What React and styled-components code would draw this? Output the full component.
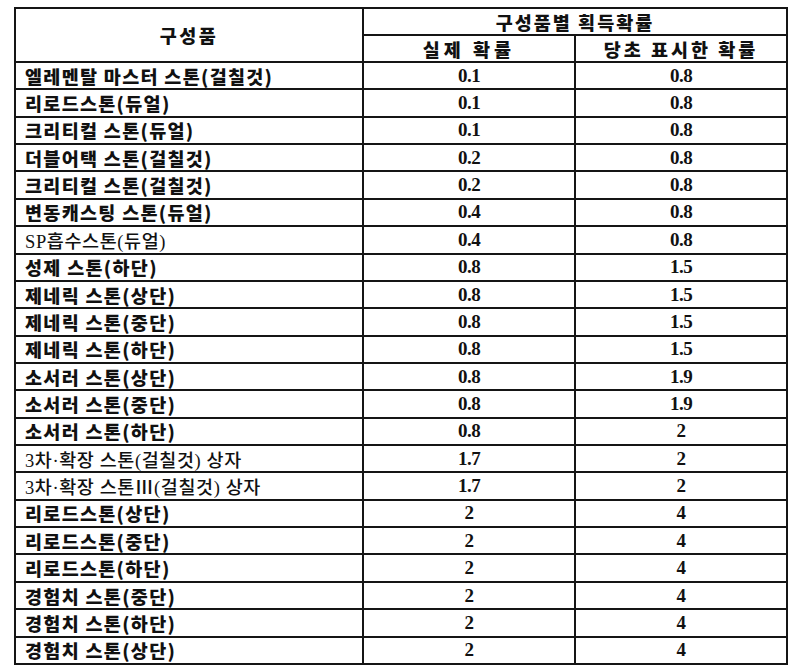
import React from 'react'
import styled, { createGlobalStyle } from 'styled-components'

const GlobalStyle = createGlobalStyle`
    html, body {
        margin: 0;
        padding: 0;
        background: #ffffff;
    }
`

const Page = styled.div`
    padding: 7px 0 0 14px;
    width: 792px;
    height: 672px;
    box-sizing: border-box;
    background: #fff;
`

const Grid = styled.div`
    display: grid;
    width: 774px;
    box-sizing: border-box;
    grid-template-columns: 346px 210px 210px;
    grid-template-rows: 25px 25px repeat(22, 25.36px);
    gap: 2px;
    padding: 2px;
    background: #151515;
`

const Cell = styled.div`
    background: #fff;
    display: flex;
    align-items: center;
    justify-content: ${props => (props.left ? 'flex-start' : 'center')};
    padding-left: ${props => (props.left ? '9px' : '0')};
    overflow: hidden;
    white-space: nowrap;
    color: #111;
`

const HeadCell = styled(Cell)`
    grid-row: ${props => props.row || 'auto'};
    grid-column: ${props => props.col || 'auto'};
    font-family: "Noto Sans CJK KR", sans-serif;
    font-weight: 900;
    font-size: 18.5px;
    letter-spacing: ${props => props.spacing || '2.5px'};
`

const NameCell = styled(Cell)`
    font-family: ${props => (props.plain
        ? '"Liberation Serif", "Noto Sans CJK KR", serif'
        : '"Noto Sans CJK KR", sans-serif')};
    font-weight: ${props => (props.plain ? 500 : 800)};
    font-size: ${props => (props.plain ? '18.5px' : '18.5px')};
    letter-spacing: ${props => (props.plain ? '0.6px' : '1.3px')};
`

const NumCell = styled(Cell)`
    font-family: "Liberation Serif", "DejaVu Serif", serif;
    font-weight: 700;
    font-size: 19px;
    letter-spacing: -0.5px;
`

const rows = [
    { name: '엘레멘탈 마스터 스톤(걸칠것)', real: '0.1', shown: '0.8' },
    { name: '리로드스톤(듀얼)', real: '0.1', shown: '0.8' },
    { name: '크리티컬 스톤(듀얼)', real: '0.1', shown: '0.8' },
    { name: '더블어택 스톤(걸칠것)', real: '0.2', shown: '0.8' },
    { name: '크리티컬 스톤(걸칠것)', real: '0.2', shown: '0.8' },
    { name: '변동캐스팅 스톤(듀얼)', real: '0.4', shown: '0.8' },
    { name: 'SP흡수스톤(듀얼)', real: '0.4', shown: '0.8', plain: true },
    { name: '성제 스톤(하단)', real: '0.8', shown: '1.5' },
    { name: '제네릭 스톤(상단)', real: '0.8', shown: '1.5' },
    { name: '제네릭 스톤(중단)', real: '0.8', shown: '1.5' },
    { name: '제네릭 스톤(하단)', real: '0.8', shown: '1.5' },
    { name: '소서러 스톤(상단)', real: '0.8', shown: '1.9' },
    { name: '소서러 스톤(중단)', real: '0.8', shown: '1.9' },
    { name: '소서러 스톤(하단)', real: '0.8', shown: '2' },
    { name: '3차·확장 스톤(걸칠것) 상자', real: '1.7', shown: '2', plain: true },
    { name: '3차·확장 스톤Ⅲ(걸칠것) 상자', real: '1.7', shown: '2', plain: true },
    { name: '리로드스톤(상단)', real: '2', shown: '4' },
    { name: '리로드스톤(중단)', real: '2', shown: '4' },
    { name: '리로드스톤(하단)', real: '2', shown: '4' },
    { name: '경험치 스톤(중단)', real: '2', shown: '4' },
    { name: '경험치 스톤(하단)', real: '2', shown: '4' },
    { name: '경험치 스톤(상단)', real: '2', shown: '4' },
]

export default function App() {
    return (
        <Page>
            <GlobalStyle />
            <Grid>
                <HeadCell row="1 / 3" col="1">구성품</HeadCell>
                <HeadCell row="1" col="2 / 4" spacing="2px">구성품별 획득확률</HeadCell>
                <HeadCell row="2" col="2" spacing="4px">실제 확률</HeadCell>
                <HeadCell row="2" col="3" spacing="3px">당초 표시한 확률</HeadCell>

                {rows.map(r => (
                    <React.Fragment key={r.name}>
                        <NameCell left plain={r.plain}>{r.name}</NameCell>
                        <NumCell>{r.real}</NumCell>
                        <NumCell>{r.shown}</NumCell>
                    </React.Fragment>
                ))}
            </Grid>
        </Page>
    )
}
